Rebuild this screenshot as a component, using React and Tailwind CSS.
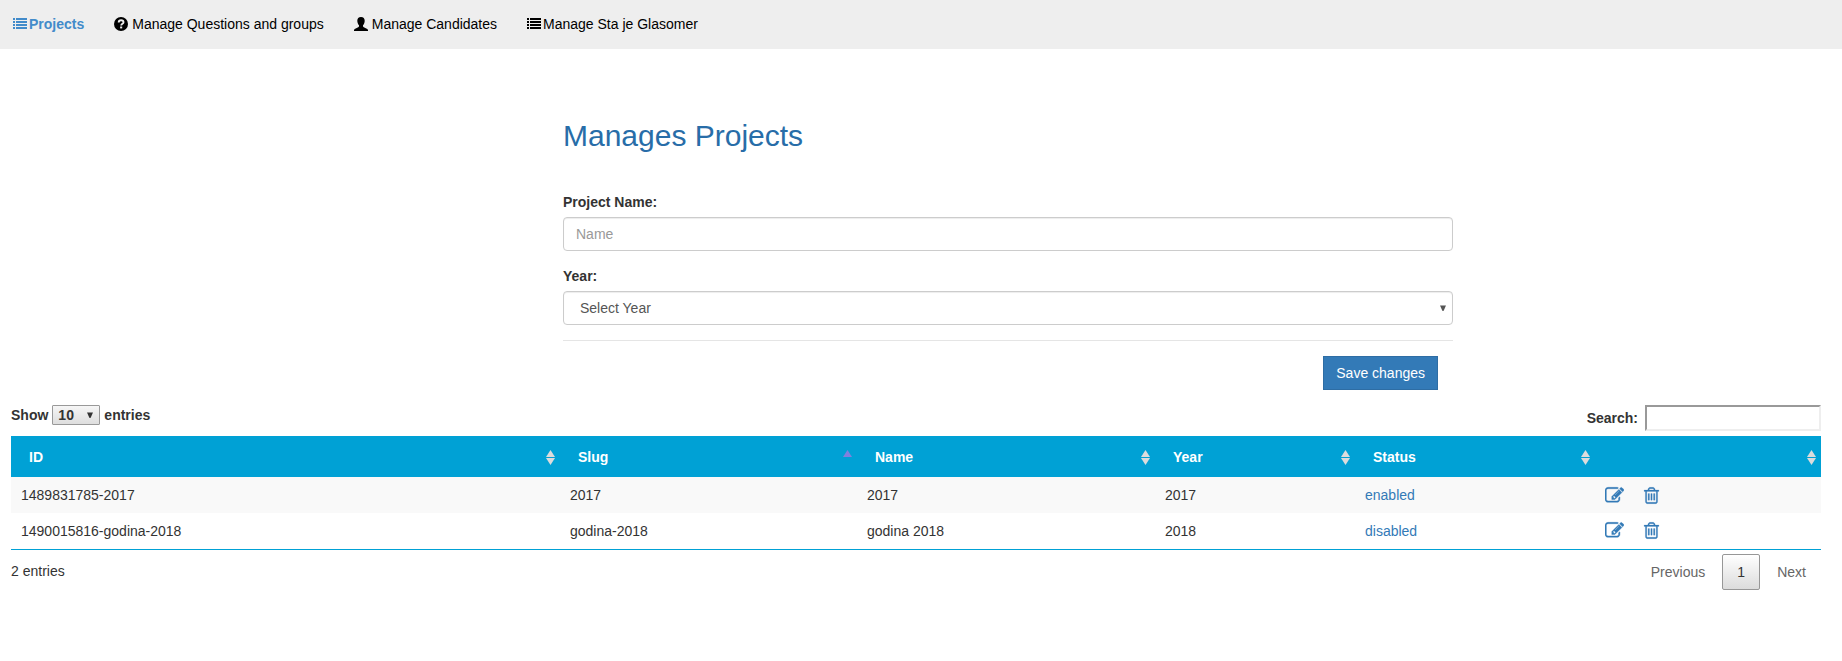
import React from "react";

function ListIcon() {
  return (
    <svg viewBox="0 0 14 14" className="size-3.5 shrink-0" fill="currentColor" aria-hidden="true">
      <path d="M0 1h2v2H0zM3 1h11v2H3zM0 4h2v2H0zM3 4h11v2H3zM0 7h2v2H0zM3 7h11v2H3zM0 10h2v2H0zM3 10h11v2H3z" />
    </svg>
  );
}

function QuestionIcon() {
  return (
    <svg viewBox="0 0 14 14" className="size-3.5 shrink-0" aria-hidden="true">
      <circle cx="7" cy="7" r="7" fill="currentColor" />
      <path d="M4.7 5.5C4.7 3.900 5.600 3.200 7.100 3.200s2.400.8 2.400 2c0 1.700-2.300 1.600-2.300 3.400" fill="none" stroke="#eee" strokeWidth="1.9" />
      <path d="M6.100 9.500H8.200v1.900H6.100z" fill="#eee" />
    </svg>
  );
}

function UserIcon() {
  return (
    <svg viewBox="0 0 14 14" className="size-3.5 shrink-0" fill="currentColor" aria-hidden="true">
      <path d="M7 0C9.500 0 10.700 1.500 10.700 3.700c0 1.900-.7 3.500-1.700 4.500v1.100c0 .5.3.8.8 1l3 1.400c.7.300 1.200.9 1.200 1.600V14H0v-.7c0-.7.500-1.300 1.200-1.600l3-1.400c.5-.2.8-.5.8-1V8.200C4 7.200 3.300 5.600 3.300 3.700 3.300 1.500 4.500 0 7 0z" />
    </svg>
  );
}

function EditIcon() {
  return (
    <svg viewBox="0 0 1792 1792" className="size-[19px]" fill="currentColor" stroke="currentColor" strokeWidth="36" aria-hidden="true">
      <path d="M888 1184l116-116-152-152-116 116v56h96v96h56zm440-720q-16-16-33 1l-350 350q-17 17-1 33t33-1l350-350q17-17 1-33zm80 594v190q0 119-84.5 203.5t-203.5 84.5h-832q-119 0-203.500-84.500t-84.500-203.500v-832q0-119 84.500-203.500t203.500-84.500h832q63 0 117 25 15 7 18 23 3 17-9 29l-49 49q-14 14-32 8-23-6-45-6h-832q-66 0-113 47t-47 113v832q0 66 47 113t113 47h832q66 0 113-47t47-113v-126q0-13 9-22l64-64q15-15 35-7t20 29zm-96-738l288 288-672 672h-288v-288zm444 132l-92 92-288-288 92-92q28-28 68-28t68 28l152 152q28 28 28 68t-28 68z" />
    </svg>
  );
}

function TrashIcon() {
  return (
    <svg viewBox="0 0 1792 1792" className="size-[19px]" fill="currentColor" stroke="currentColor" strokeWidth="20" aria-hidden="true">
      <path d="M704 736v576q0 14-9 23t-23 9h-64q-14 0-23-9t-9-23v-576q0-14 9-23t23-9h64q14 0 23 9t9 23zm256 0v576q0 14-9 23t-23 9h-64q-14 0-23-9t-9-23v-576q0-14 9-23t23-9h64q14 0 23 9t9 23zm256 0v576q0 14-9 23t-23 9h-64q-14 0-23-9t-9-23v-576q0-14 9-23t23-9h64q14 0 23 9t9 23zm128 724v-948h-896v948q0 22 7 40.500t14.500 27 10.500 8.500h832q3 0 10.500-8.500t14.500-27 7-40.500zm-672-1076h448l-48-117q-7-9-17-11h-317q-10 2-17 11zm928 32v64q0 14-9 23t-23 9h-96v948q0 83-47 143.500t-113 60.500h-832q-66 0-113-58.500t-47-141.500v-952h-96q-14 0-23-9t-9-23v-64q0-14 9-23t23-9h309l70-167q15-37 54-63t79-26h320q40 0 79 26t54 63l70 167h309q14 0 23 9t9 23z" />
    </svg>
  );
}

function SortIcon({ sorted }) {
  return (
    <svg viewBox="0 0 9 15" className="mt-0.5 h-[15px] w-[9px] shrink-0" aria-hidden="true">
      <path d="M4.500 0L9 7H0z" fill={sorted ? "#8080dd" : "#dcdcdc"} />
      {!sorted && <path d="M0 8h9L4.500 15z" fill="#dcdcdc" />}
    </svg>
  );
}

function Caret({ className }) {
  return (
    <svg viewBox="0 0 6 6" className={"pointer-events-none absolute size-1.5 " + className} aria-hidden="true">
      <path d="M0 .5h6L3.500 6h-1z" fill="currentColor" />
    </svg>
  );
}

const links = [
  { label: "Projects", Icon: ListIcon, className: "gap-0.5 font-bold text-[#428bca]" },
  { label: "Manage Questions and groups", Icon: QuestionIcon, className: "gap-1 text-black" },
  { label: "Manage Candidates", Icon: UserIcon, className: "gap-1 text-black" },
  { label: "Manage Sta je Glasomer", Icon: ListIcon, className: "gap-0.5 text-black" },
];

const columns = [
  { label: "ID", width: "w-[549px]" },
  { label: "Slug", width: "w-[297px]", sorted: true },
  { label: "Name", width: "w-[298px]" },
  { label: "Year", width: "w-[200px]" },
  { label: "Status", width: "w-[240px]" },
  { label: "", width: "w-[226px]" },
];

const rows = [
  { id: "1489831785-2017", slug: "2017", name: "2017", year: "2017", status: "enabled" },
  { id: "1490015816-godina-2018", slug: "godina-2018", name: "godina 2018", year: "2018", status: "disabled" },
];

const field =
  "h-[34px] w-full rounded border border-[#ccc] bg-white text-[#555] shadow-[inset_0_1px_1px_rgba(0,0,0,0.075)] outline-none focus:border-[#66afe9]";

export default function App() {
  return (
    <div className="bg-white font-['Liberation_Sans',Arial,sans-serif] text-[14px] leading-5 text-[#333]">
      <nav className="flex flex-wrap items-center gap-x-[30px] bg-[#eee] pt-3.5 pr-3 pb-[15px] pl-[13px]">
        {links.map(({ label, Icon, className }) => (
          <a key={label} href="#" className={"flex items-center " + className}>
            <Icon />
            {label}
          </a>
        ))}
      </nav>

      <main className="pt-[70px] pr-[21px] pb-10 pl-[11px]">
        <form className="grid grid-cols-[552fr_890fr_368fr]" onSubmit={(e) => e.preventDefault()}>
          <div className="col-start-2">
            <h1 className="text-[30px] leading-[33px] text-[#286da8]">Manages Projects</h1>
            <div className="mt-10">
              <label htmlFor="name" className="mb-[5px] block font-bold">Project Name:</label>
              <input id="name" type="text" placeholder="Name" className={field + " block px-3 placeholder:text-[#999]"} />
            </div>
            <div className="mt-[15px]">
              <label htmlFor="year" className="mb-[5px] block font-bold">Year:</label>
              <div className="relative">
                <select id="year" className={field + " block appearance-none px-4"}>
                  <option>Select Year</option>
                  <option>2017</option>
                  <option>2018</option>
                </select>
                <Caret className="top-3.5 right-[7px] text-[#555]" />
              </div>
            </div>
            <hr className="mt-[15px] border-[#e5e5e5]" />
            <div className="mt-[15px] flex justify-end pr-[15px]">
              <button type="submit" className="h-[34px] border border-[#2e6da4] bg-[#337ab7] px-3 text-white">Save changes</button>
            </div>
          </div>
        </form>

        <div className="mt-[15px] flex items-start justify-between pb-[5px] font-bold">
          <div className="flex items-center gap-1">
            <label htmlFor="length">Show</label>
            <div className="relative">
              <select id="length" className="block h-5 w-12 appearance-none rounded-[1px] border border-[#999] bg-linear-to-b from-[#f6f6f6] to-[#dedede] pl-[5px] leading-[18px]">
                <option>10</option>
                <option>25</option>
                <option>50</option>
              </select>
              <Caret className="top-[7px] right-[7px]" />
            </div>
            <label htmlFor="length">entries</label>
          </div>
          <div className="flex items-center gap-[7px]">
            <label htmlFor="search">Search:</label>
            <input id="search" type="search" className="h-[26px] w-44 appearance-none border-2 border-t-[#999] border-r-[#eee] border-b-[#eee] border-l-[#999] bg-white px-px font-normal" />
          </div>
        </div>

        <table className="w-full table-fixed border-b border-[#00a1d5]">
          <thead className="bg-[#00a1d5] text-white">
            <tr>
              {columns.map(({ label, width, sorted }, i) => (
                <th key={i} scope="col" aria-sort={sorted ? "ascending" : "none"} className={"p-0 " + width}>
                  <button
                    type="button"
                    aria-label={label || "Actions"}
                    className="flex h-[41px] w-full items-center justify-between pr-[5px] pl-[18px] text-left font-bold"
                  >
                    <span>{label}</span>
                    <SortIcon sorted={sorted} />
                  </button>
                </th>
              ))}
            </tr>
          </thead>
          <tbody>
            {rows.map((row) => (
              <tr key={row.id} className="h-9 odd:bg-[#f9f9f9]">
                <td className="px-2.5">{row.id}</td>
                <td className="px-2.5">{row.slug}</td>
                <td className="px-2.5">{row.name}</td>
                <td className="px-2.5">{row.year}</td>
                <td className="px-2.5">
                  <a href="#" className="text-[#337ab7]">{row.status}</a>
                </td>
                <td className="px-2.5">
                  <div className="flex items-center gap-[18px] text-[#337ab7]">
                    <a href="#" aria-label="Edit"><EditIcon /></a>
                    <a href="#" aria-label="Delete"><TrashIcon /></a>
                  </div>
                </td>
              </tr>
            ))}
          </tbody>
        </table>

        <div className="flex items-start justify-between">
          <p className="pt-[11px]">2 entries</p>
          <div className="flex items-center pt-1 text-[#666]">
            <button type="button" className="h-9 px-[17px]">Previous</button>
            <button type="button" aria-current="page" className="h-9 w-[38px] rounded-xs border border-[#979797] bg-linear-to-b from-white to-[#dcdcdc] text-[#333]">1</button>
            <button type="button" className="h-9 pr-[15px] pl-[17px]">Next</button>
          </div>
        </div>
      </main>
    </div>
  );
}
